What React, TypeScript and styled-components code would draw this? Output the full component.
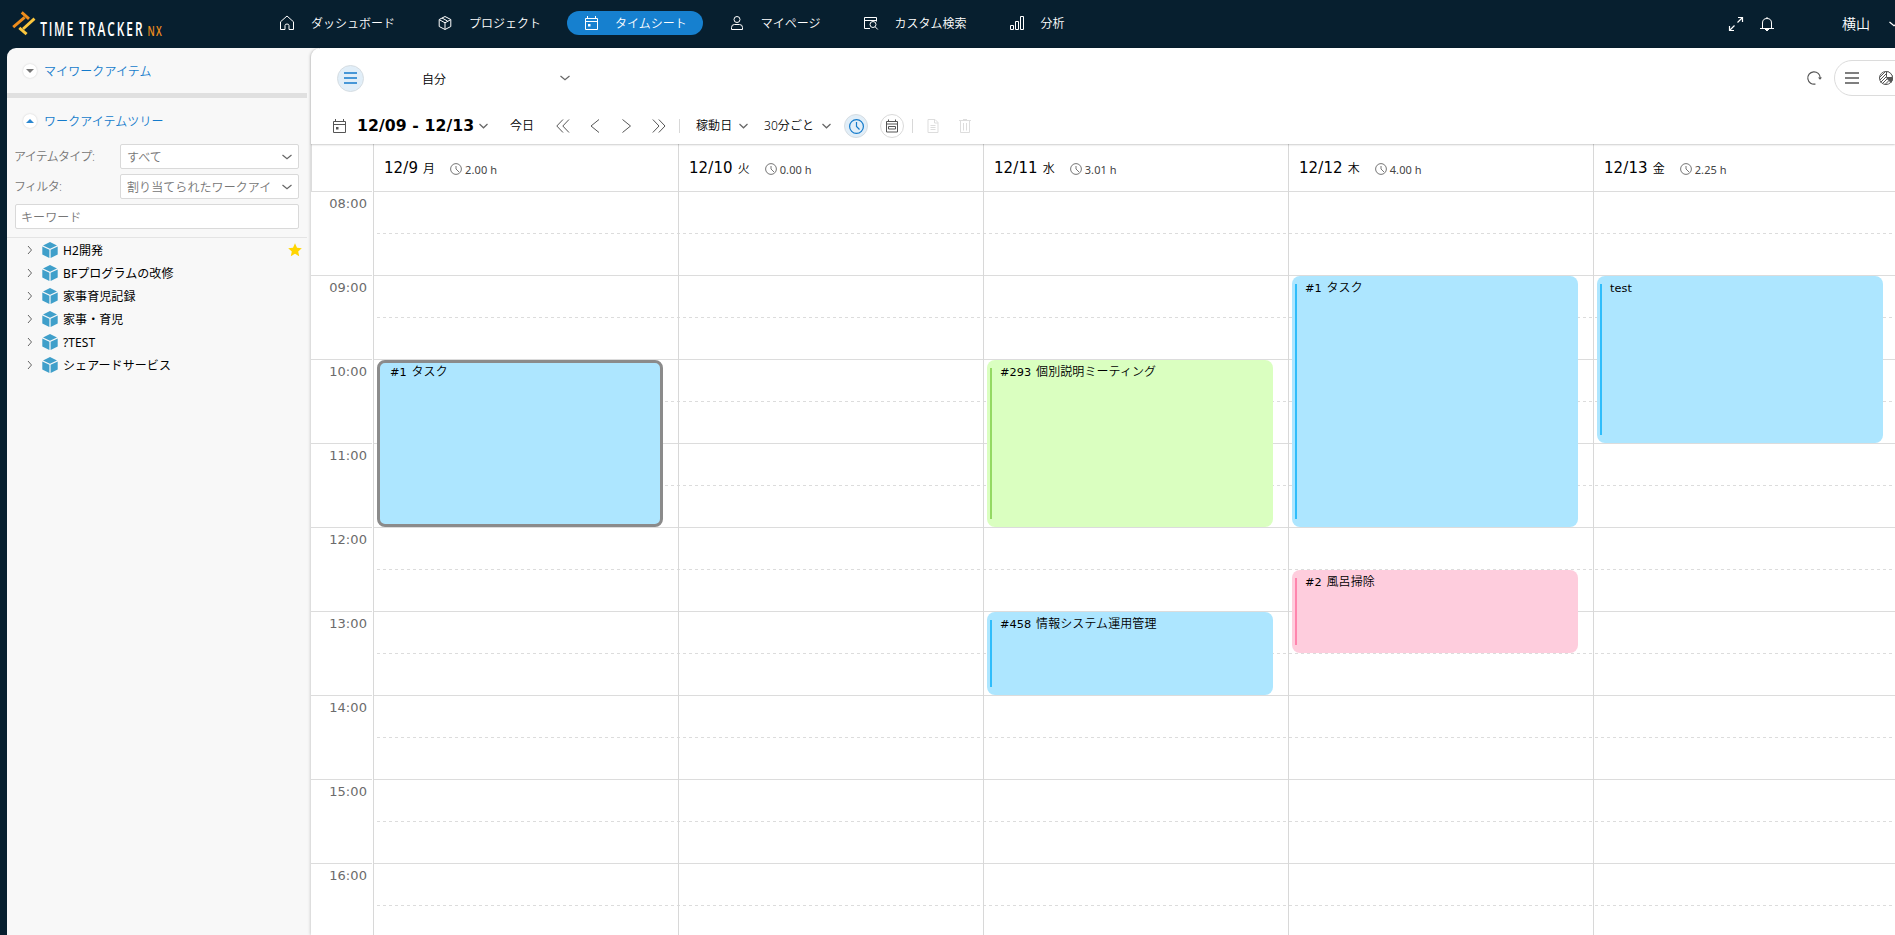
import React from "react";
import styled, { createGlobalStyle, css } from "styled-components";

const GlobalStyle = createGlobalStyle`
  * { box-sizing: border-box; }
  body {
    margin: 0;
    background: #071f2f;
    color: #000;
    font: 350 12px/1 "Noto Sans", "Noto Sans CJK JP", sans-serif;
    letter-spacing: 0.08px;
    overflow: hidden;
  }
  svg { flex: none; }
`;

const LINE = "#dcdcdc";

/* ---------- shell ---------- */

const Page = styled.div`
  width: 1895px;
  height: 935px;
  display: flex;
  flex-direction: column;
  overflow: hidden;
  white-space: nowrap;
`;

const TopBar = styled.header`
  height: 48px;
  flex: none;
  display: flex;
  align-items: center;
  color: #fff;
`;

const LogoBox = styled.div`
  width: 263px;
  height: 48px;
  flex: none;
`;

const Nav = styled.nav`
  display: flex;
  align-items: center;
  gap: 10px;
  padding-bottom: 2px;
`;

const NavItem = styled.a<{ $active?: boolean }>`
  display: flex;
  align-items: center;
  gap: 16px;
  height: 24px;
  padding: 0 16px;
  border-radius: 12px;
  letter-spacing: 0;
  background: ${(p) => (p.$active ? "#1680cf" : "transparent")};
`;

/* Nudges a label onto the optical centre of its row. */
const Label = styled.span<{ $drop?: number }>`
  padding-top: ${(p) => p.$drop ?? 2}px;
`;

const TopActions = styled.div`
  display: flex;
  align-items: center;
  margin-left: auto;
  width: 167px;
  flex: none;
  padding-bottom: 1px;
`;

const ActionSlot = styled.span<{ $gap: number }>`
  display: flex;
  flex: none;
  margin-right: ${(p) => p.$gap}px;
`;

const UserName = styled.span`
  font-size: 14px;
  margin-right: 19px;
`;

const Body = styled.div`
  flex: 1;
  min-height: 0;
  display: flex;
  padding-left: 7px;
`;

/* ---------- sidebar ---------- */

const Sidebar = styled.aside`
  width: 312px;
  margin-right: -8px;
  flex: none;
  background: #f8f8f8;
  border-top-left-radius: 9px;
`;

const SidebarInner = styled.div`
  width: 300px;
`;

const SectionHead = styled.div<{ $height: number }>`
  display: flex;
  align-items: center;
  height: ${(p) => p.$height}px;
  padding-left: 16px;
  gap: 7px;
  color: #147bcb;
`;

const Toggle = styled.span`
  width: 14px;
  height: 14px;
  border-radius: 50%;
  background: #fff;
  box-shadow: 0 0 2px rgba(0, 0, 0, 0.18);
  display: flex;
  align-items: center;
  justify-content: center;
`;

const Splitter = styled.div`
  height: 5px;
  background: #e0e0e0;
`;

const Filters = styled.div`
  padding: 0 8px 8px;
  border-bottom: 1px solid #e4e4e4;
`;

const FilterRow = styled.label`
  display: flex;
  align-items: center;
  height: 25px;
  margin-bottom: 5px;
  color: #767676;
`;

const FilterLabel = styled.span`
  width: 106px;
  margin-left: -1px;
  letter-spacing: -0.7px;
`;

const Field = styled.span`
  flex: 1;
  height: 25px;
  border: 1px solid #d9d9d9;
  border-radius: 2px;
  background: #fff;
  color: #767676;
  display: flex;
  align-items: center;
  justify-content: space-between;
  padding: 0 6px;
`;

const Keyword = styled(Field)`
  padding-left: 5px;
`;

const TreeRow = styled.div`
  display: flex;
  align-items: center;
  height: 23px;
  padding: 1px 5px 0 20px;
`;

const TreeLabel = styled.span`
  flex: 1;
  margin-left: 5px;
  padding-top: 1px;
  font-weight: 400;
`;

/* ---------- main panel ---------- */

const Main = styled.main`
  flex: 1;
  min-width: 0;
  display: flex;
  flex-direction: column;
  background: #fff;
  border-top-left-radius: 9px;
  box-shadow: -1px 0 3px rgba(0, 0, 0, 0.16);
`;

const Controls = styled.div`
  height: 96px;
  flex: none;
  position: relative;
  z-index: 1;
  box-shadow: 0 1px 2px rgba(0, 0, 0, 0.2);
  border-top-left-radius: 9px;
`;

const OwnerRow = styled.div`
  height: 60px;
  display: flex;
  align-items: center;
  padding-left: 26px;
`;

const Round = styled.span<{ $size: number; $on?: boolean }>`
  width: ${(p) => p.$size}px;
  height: ${(p) => p.$size}px;
  border-radius: 50%;
  border: 1px solid ${(p) => (p.$on ? "#d6dde2" : "#dadada")};
  background: ${(p) => (p.$on ? "#e1eef8" : "#fff")};
  display: flex;
  align-items: center;
  justify-content: center;
  flex: none;
`;

const OwnerSelect = styled.div`
  width: 148px;
  margin-left: 58px;
  display: flex;
  justify-content: space-between;
  align-items: center;
`;

const ViewTools = styled.div`
  margin-left: auto;
  width: 89px;
  flex: none;
  display: flex;
  align-items: center;
  gap: 12px;
`;

const ViewPill = styled.div`
  width: 100px;
  height: 36px;
  flex: none;
  border: 1px solid ${LINE};
  border-radius: 18px;
  display: flex;
  align-items: center;
  gap: 19px;
  padding-left: 10px;
`;

const DateRow = styled.div`
  height: 36px;
  display: flex;
  align-items: center;
  padding-left: 20px;
`;

const Slot = styled.span<{ $w: number }>`
  width: ${(p) => p.$w}px;
  flex: none;
  display: flex;
  align-items: center;
`;

const DateRange = styled.span`
  width: 122px;
  flex: none;
  font: bold 15.7px/1 "DejaVu Sans", sans-serif;
`;

const Rule = styled.span<{ $gap: number }>`
  width: 1px;
  height: 14px;
  flex: none;
  background: #d8d8d8;
  margin-right: ${(p) => p.$gap}px;
`;

/* ---------- calendar ---------- */

const Calendar = styled.section`
  flex: 1;
  min-height: 0;
  display: flex;
  overflow: hidden;
`;

const Gutter = styled.div`
  width: 62px;
  flex: none;
  padding-right: 1px;
`;

const GutterHead = styled.div`
  height: 48px;
  border-left: 1px solid ${LINE};
  border-bottom: 1px solid ${LINE};
`;

const HourLabel = styled.div`
  height: 84px;
  border-bottom: 1px solid ${LINE};
  padding: 5px 5px 0 0;
  text-align: right;
  color: #6b6b6b;
  font: 13px/13px "DejaVu Sans", sans-serif;
`;

const Board = styled.div`
  flex: 1;
  min-width: 0;
  display: grid;
  grid-template: 1fr / 1fr;
`;

const HourLines = styled.div`
  grid-area: 1 / 1;
  padding-top: 48px;
`;

const HourLine = styled.div`
  height: 84px;
  border-bottom: 1px solid ${LINE};
  background: repeating-linear-gradient(90deg, ${LINE} 0 3px, transparent 3px 6px) 4px 41px / 100% 1px no-repeat;
`;

const Days = styled.div`
  grid-area: 1 / 1;
  display: flex;
  overflow: hidden;
`;

const Day = styled.div`
  width: 305px;
  flex: none;
  border-left: 1px solid #d8d8d8;
`;

const DayHead = styled.div`
  height: 48px;
  border-bottom: 1px solid ${LINE};
  display: flex;
  align-items: center;
  padding-left: 10px;
`;

const DayNumber = styled.span`
  font: 15px/1 "DejaVu Sans", sans-serif;
  padding-top: 1px;
`;

const Weekday = styled.span`
  margin: 3px 15px 0 5px;
  font-size: 12px;
`;

const Worked = styled.span`
  display: flex;
  align-items: center;
  gap: 3px;
  margin-top: 3px;
  font-size: 11px;
  font-weight: 400;
  color: #444;
`;

const DayBody = styled.div`
  position: relative;
  height: 840px;
`;

const tones = {
  blue: { fill: "#ade6ff", bar: "#2fbdfb" },
  green: { fill: "#daffc0", bar: "#94d963" },
  pink: { fill: "#fecddd", bar: "#ff85ae" },
};

type Tone = keyof typeof tones;

/* An entry is placed by its start and length in hours; one hour is 84px. */
const Entry = styled.div<{ $start: number; $hours: number; $tone: Tone; $selected?: boolean }>`
  position: absolute;
  left: 3px;
  width: 286px;
  top: ${(p) => (p.$start - 8) * 84}px;
  height: ${(p) => p.$hours * 84 - 1}px;
  border-radius: 8px;
  background: ${(p) => tones[p.$tone].fill};
  padding: 5px 0 0 13px;
  line-height: 13px;
  ${(p) =>
    p.$selected
      ? css`
          border: 3px solid #8b8b8b;
          padding: 2px 0 0 10px;
        `
      : css`
          &::before {
            content: "";
            position: absolute;
            left: 3px;
            top: 8px;
            bottom: 8px;
            width: 2px;
            background: ${tones[p.$tone].bar};
          }
        `}
`;

const EntryCode = styled.span`
  font: 11.3px/13px "DejaVu Sans", sans-serif;
  margin-right: 1.5px;
`;

/* ---------- drawings ---------- */

type SvgProps = { w?: number; h?: number; c?: string; sw?: number; children?: React.ReactNode };

const Svg = ({ w = 16, h = w, c = "currentColor", sw = 1, children }: SvgProps) => (
  <svg width={w} height={h} viewBox={`0 0 ${w} ${h}`} fill="none" stroke={c} strokeWidth={sw}>
    {children}
  </svg>
);

const Logo = () => (
  <svg width="263" height="48" viewBox="0 0 263 48">
    <g fill="none" strokeWidth="2.9">
      <path d="M21.700 12.400l7.300 6.400" stroke="#ef8d1c" />
      <path d="M13.200 27.200L24.600 17.400" stroke="#ef8d1c" />
      <path d="M34.500 18.700L23 29" stroke="#fbc73e" />
      <path d="M19.300 27.800l7.300 6.400" stroke="#fbc73e" />
    </g>
    <g fontFamily="'Open Sans', sans-serif" fontWeight="600">
      <g transform="scale(.58 1)" fontSize="20.500" fill="#fff">
        <text x="69.500" y="36" letterSpacing="3">TIME</text>
        <text x="136.500" y="36" letterSpacing="3.400">TRACKER</text>
      </g>
      <g transform="scale(.66 1)" fontSize="14" fill="#ef8d1c">
        <text x="223.500" y="36" letterSpacing="1.800">NX</text>
      </g>
    </g>
  </svg>
);

const HomeIcon = () => (
  <Svg>
    <path d="M1.500 6.800L8 1l6.500 5.800v7.700h-4.500v-4q0-1.500-2-1.500t-2 1.500v4H1.500z" />
  </Svg>
);
const BoxIcon = () => (
  <Svg>
    <path d="M8 1.500l5.800 3v7L8 14.500l-5.800-3v-7zM2.500 4.800L8 7.800l5.500-3M8 7.800v6.500M5 3l5.500 3" />
  </Svg>
);
const CalendarIcon = ({ c }: { c?: string }) => (
  <Svg c={c}>
    <path d="M2.500 3.500h12v11h-12zM2.500 6.500h12M4.500 1v2.500M12.500 1v2.500" />
    <path d="M5 9h2.500v2.500H5z" fill={c || "#fff"} stroke="none" />
  </Svg>
);
const UserIcon = () => (
  <Svg>
    <circle cx="8" cy="4.500" r="3" />
    <path d="M2.500 14.500v-2q0-3 3-3h5q3 0 3 3v2z" />
  </Svg>
);
const SearchIcon = () => (
  <Svg>
    <path d="M7 13.500H1.500v-11h12v4M1.500 5.500h12" />
    <circle cx="10" cy="9.500" r="3" />
    <path d="M12.200 11.800l2.600 2.700" />
  </Svg>
);
const ChartIcon = () => (
  <Svg>
    <path d="M1.500 10.500h3v4h-3zM6.500 6.500h3v8h-3zM11.500 1.500h3v13h-3z" />
  </Svg>
);
const ExpandIcon = () => (
  <Svg sw={1.200}>
    <path d="M9.500 6.500l5-5M10 1.500h4.500V6M6.500 9.500l-5 5M1.500 10v4.500H6" />
  </Svg>
);
const BellIcon = () => (
  <Svg>
    <path d="M1 12.500h14M3.500 12V7q0-4.500 4.500-4.500T12.500 7v5M8 1v1.500" />
    <path d="M6 13h4l-2 2z" fill="#fff" />
  </Svg>
);
const Chevron = ({ w = 10, c = "#666" }: { w?: number; c?: string }) => (
  <Svg w={w} h={6} c={c} sw={1.200}>
    <path d={`M.5 1L${w / 2} 4.800 ${w - 0.5} 1`} />
  </Svg>
);
const Bars = ({ w, c }: { w: number; c: string }) => (
  <Svg w={w} h={12} c={c} sw={1.400}>
    <path d={`M0 1h${w}M0 6h${w}M0 11h${w}`} />
  </Svg>
);
const Arrow = ({ d }: { d: string }) => (
  <Svg w={16} h={14} c="#555">
    <path d={d} />
  </Svg>
);
const Clock = ({ s, c, sw = 1 }: { s: number; c: string; sw?: number }) => (
  <Svg w={s} c={c} sw={sw}>
    <circle cx={s / 2} cy={s / 2} r={s / 2 - 0.6} />
    <path d={`M${s / 2} 3v${s / 2 - 3}l3 3`} />
  </Svg>
);
const RefreshIcon = () => (
  <Svg c="#555" sw={1.200}>
    <path d="M9.500 14A6.200 6.200 0 1 1 14.200 8" />
    <path d="M12 7.500h4l-2 2.300z" fill="#555" stroke="none" />
  </Svg>
);
const PieIcon = () => (
  <Svg c="#555">
    <circle cx="8" cy="8" r="6.500" />
    <path d="M1.500 7.500l5.500-5.500M2 10l6-6M2.500 12.500L8 7M4.500 13.500L9 9M7 14.500l4-4" />
    <path d="M8.500 1.500v6h6A6.500 6.500 0 0 0 8.500 1.500z" fill="#fff" />
    <path d="M9 8.500h5.500a6.500 6.500 0 0 1-1.500 4z" fill="#555" />
  </Svg>
);
const ScheduleIcon = () => (
  <Svg c="#555">
    <path d="M2.500 3.500h11v10.500h-11zM2.500 6h11M4.500 1.500v2M11.500 1.500v2M4.500 8.500h7v2.500h-7z" />
  </Svg>
);
const DocIcon = () => (
  <Svg c="#ddd">
    <path d="M3 1.500h7l3 3v10H3zM9.500 1.500V5H13M5.500 7.500h5M5.500 9.500h5M5.500 11.500h5" />
  </Svg>
);
const TrashIcon = () => (
  <Svg c="#ddd">
    <path d="M2 2.500h12M6 1.500h4M3.500 3v11.500h9V3M6.500 5v7.500M9.500 5v7.500" />
  </Svg>
);
const CubeIcon = () => (
  <svg width="16" height="16" viewBox="0 0 16 16" fill="#3f9fca">
    <path d="M8 0l7 3.400-7 3.400-7-3.400z" />
    <path d="M.3 4.400l7.100 3.400V16L.3 12.600z" />
    <path d="M15.700 4.400L8.600 7.800V16l7.100-3.400z" />
  </svg>
);
const StarIcon = () => (
  <svg width="14" height="14" viewBox="0 0 14 14" fill="#ffd500">
    <path d="M7 .3l2 4.400 4.800.5-3.600 3.200 1 4.800L7 10.800l-4.200 2.400 1-4.800L.2 5.200 5 4.700z" />
  </svg>
);
const Triangle = ({ up }: { up?: boolean }) => (
  <svg width="8" height="4" viewBox="0 0 8 4" fill={up ? "#2b87d0" : "#777"}>
    <path d={up ? "M4 0l4 4H0z" : "M0 0h8L4 4z"} />
  </svg>
);

/* ---------- data ---------- */

const navItems = [
  { label: "ダッシュボード", icon: <HomeIcon /> },
  { label: "プロジェクト", icon: <BoxIcon /> },
  { label: "タイムシート", icon: <CalendarIcon />, active: true },
  { label: "マイページ", icon: <UserIcon /> },
  { label: "カスタム検索", icon: <SearchIcon /> },
  { label: "分析", icon: <ChartIcon /> },
];

const tree = ["H2開発", "BFプログラムの改修", "家事育児記録", "家事・育児", "?TEST", "シェアードサービス"];

const hours = [8, 9, 10, 11, 12, 13, 14, 15, 16];

type EntryData = { start: number; hours: number; tone: Tone; code: string; title?: string; selected?: boolean };

const days: { date: string; weekday: string; worked: string; entries: EntryData[] }[] = [
  {
    date: "12/9",
    weekday: "月",
    worked: "2.00 h",
    entries: [{ start: 10, hours: 2, tone: "blue", code: "#1", title: "タスク", selected: true }],
  },
  { date: "12/10", weekday: "火", worked: "0.00 h", entries: [] },
  {
    date: "12/11",
    weekday: "水",
    worked: "3.01 h",
    entries: [
      { start: 10, hours: 2, tone: "green", code: "#293", title: "個別説明ミーティング" },
      { start: 13, hours: 1, tone: "blue", code: "#458", title: "情報システム運用管理" },
    ],
  },
  {
    date: "12/12",
    weekday: "木",
    worked: "4.00 h",
    entries: [
      { start: 9, hours: 3, tone: "blue", code: "#1", title: "タスク" },
      { start: 12.5, hours: 1, tone: "pink", code: "#2", title: "風呂掃除" },
    ],
  },
  {
    date: "12/13",
    weekday: "金",
    worked: "2.25 h",
    entries: [{ start: 9, hours: 2, tone: "blue", code: "test" }],
  },
];

/* ---------- page ---------- */

export default function App() {
  return (
    <Page>
      <GlobalStyle />
      <TopBar>
        <LogoBox>
          <Logo />
        </LogoBox>
        <Nav>
          {navItems.map((item) => (
            <NavItem key={item.label} $active={item.active}>
              {item.icon}
              <Label>{item.label}</Label>
            </NavItem>
          ))}
        </Nav>
        <TopActions>
          <ActionSlot $gap={15}>
            <ExpandIcon />
          </ActionSlot>
          <ActionSlot $gap={67}>
            <BellIcon />
          </ActionSlot>
          <UserName>横山</UserName>
          <ActionSlot $gap={0}>
            <Chevron w={10} c="#fff" />
          </ActionSlot>
        </TopActions>
      </TopBar>
      <Body>
        <Sidebar>
          <SidebarInner>
            <SectionHead $height={45}>
              <Toggle>
                <Triangle />
              </Toggle>
              <Label>マイワークアイテム</Label>
            </SectionHead>
            <Splitter />
            <SectionHead $height={46}>
              <Toggle>
                <Triangle up />
              </Toggle>
              <Label>ワークアイテムツリー</Label>
            </SectionHead>
            <Filters>
              <FilterRow>
                <FilterLabel>アイテムタイプ:</FilterLabel>
                <Field>
                  <Label>すべて</Label>
                  <Chevron w={10} />
                </Field>
              </FilterRow>
              <FilterRow>
                <FilterLabel>フィルタ:</FilterLabel>
                <Field>
                  <Label>割り当てられたワークアイ</Label>
                  <Chevron w={10} />
                </Field>
              </FilterRow>
              <Keyword as="div">
                <Label>キーワード</Label>
              </Keyword>
            </Filters>
            {tree.map((name, i) => (
              <TreeRow key={name}>
                <Svg w={15} h={10} c="#666">
                  <path d="M1 1l3.500 4L1 9" />
                </Svg>
                <CubeIcon />
                <TreeLabel>{name}</TreeLabel>
                {i === 0 && <StarIcon />}
              </TreeRow>
            ))}
          </SidebarInner>
        </Sidebar>
        <Main>
          <Controls>
            <OwnerRow>
              <Round $size={27} $on>
                <Bars w={13} c="#147bcb" />
              </Round>
              <OwnerSelect>
                <Label $drop={4}>自分</Label>
                <Chevron w={10} />
              </OwnerSelect>
              <ViewTools>
                <RefreshIcon />
                <ViewPill>
                  <Bars w={14} c="#555" />
                  <PieIcon />
                </ViewPill>
              </ViewTools>
            </OwnerRow>
            <DateRow>
              <Slot $w={26}>
                <CalendarIcon c="#555" />
              </Slot>
              <DateRange>12/09 - 12/13</DateRange>
              <Slot $w={31}>
                <Chevron w={9} />
              </Slot>
              <Slot $w={46}>今日</Slot>
              <Slot $w={34}>
                <Arrow d="M7 .5L.8 7 7 13.500M13 .5L6.800 7l6.200 6.500" />
              </Slot>
              <Slot $w={32}>
                <Arrow d="M9 .5L1 7l8 6.500" />
              </Slot>
              <Slot $w={30}>
                <Arrow d="M.5.5l8 6.500-8 6.500" />
              </Slot>
              <Slot $w={27}>
                <Arrow d="M.8.500L7 7 .8 13.500M6.800.500L13 7l-6.200 6.500" />
              </Slot>
              <Rule $gap={16} />
              <Slot $w={43}>稼動日</Slot>
              <Slot $w={25}>
                <Chevron w={9} />
              </Slot>
              <Slot $w={58}>30分ごと</Slot>
              <Slot $w={22}>
                <Chevron w={9} />
              </Slot>
              <Slot $w={36}>
                <Round $size={24} $on>
                  <Clock s={15} c="#147bcb" sw={1.200} />
                </Round>
              </Slot>
              <Slot $w={32}>
                <Round $size={24}>
                  <ScheduleIcon />
                </Round>
              </Slot>
              <Rule $gap={12} />
              <Slot $w={32}>
                <DocIcon />
              </Slot>
              <TrashIcon />
            </DateRow>
          </Controls>
          <Calendar>
            <Gutter>
              <GutterHead />
              {hours.map((h) => (
                <HourLabel key={h}>{String(h).padStart(2, "0")}:00</HourLabel>
              ))}
            </Gutter>
            <Board>
              <HourLines>
                {hours.map((h) => (
                  <HourLine key={h} />
                ))}
              </HourLines>
              <Days>
                {days.map((day) => (
                  <Day key={day.date}>
                    <DayHead>
                      <DayNumber>{day.date}</DayNumber>
                      <Weekday>{day.weekday}</Weekday>
                      <Worked>
                        <Clock s={12} c="#666" sw={0.9} />
                        {day.worked}
                      </Worked>
                    </DayHead>
                    <DayBody>
                      {day.entries.map((e) => (
                        <Entry
                          key={e.code}
                          $start={e.start}
                          $hours={e.hours}
                          $tone={e.tone}
                          $selected={e.selected}
                        >
                          <EntryCode>{e.code}</EntryCode> {e.title}
                        </Entry>
                      ))}
                    </DayBody>
                  </Day>
                ))}
              </Days>
            </Board>
          </Calendar>
        </Main>
      </Body>
    </Page>
  );
}
